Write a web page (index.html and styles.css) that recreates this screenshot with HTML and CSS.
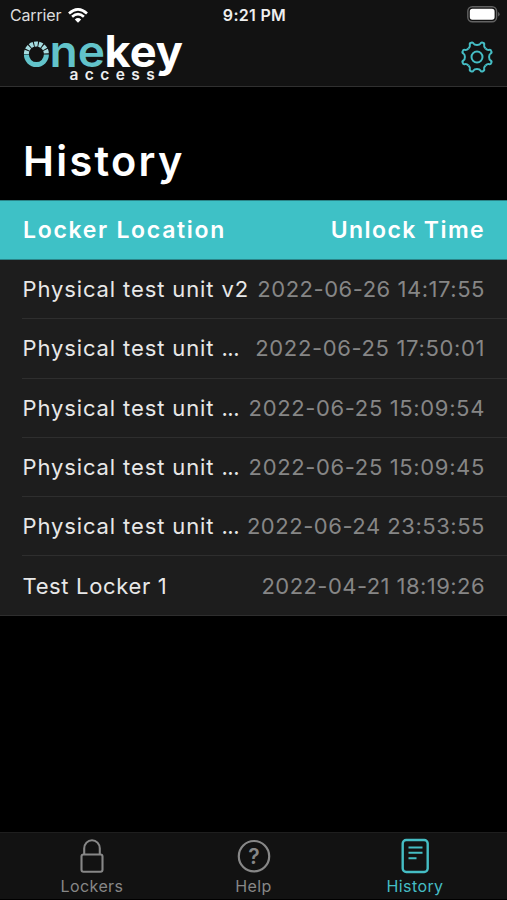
FILE: index.html
```html
<!DOCTYPE html>
<html lang="en">
<head>
<meta charset="utf-8">
<title>History</title>
<link rel="stylesheet" href="styles.css">
</head>
<body>
<div class="app">
  <header class="top">
    <div class="status">
      <div class="carrier"><span>Carrier</span>
        <svg width="20" height="15" viewBox="0 0 20 15" fill="none" stroke="#fff" stroke-width="2.7"><path d="M1 5.4Q10-2.6 19 5.4M4.1 8.7Q10 3.5 15.9 8.7"/><path d="M6.8 11.4Q10 8.8 13.2 11.4L10 14.7Z" fill="#fff" stroke="none"/></svg>
      </div>
      <div class="clock">9:21 PM</div>
      <svg class="battery" width="34" height="17" viewBox="0 0 34 17"><rect x=".8" y=".8" width="28.8" height="14.9" rx="4.5" fill="none" stroke="#626262" stroke-width="1.4"/><rect x="2.8" y="2.8" width="24.8" height="10.9" rx="2.6" fill="#fff"/><path d="M31.1 5.8q3 2.4 0 4.8z" fill="#626262"/></svg>
    </div>
    <div class="brand">
      <svg class="logo" width="170" height="56" viewBox="20 30 170 56">
        <path d="M26.4 54.6A10 10 0 0 0 46.4 54.6" fill="none" stroke="#62c3ca" stroke-width="5"/>
        <path d="M26.4 54A10 10 0 0 1 46.4 54" fill="none" stroke="#a5dce0" stroke-width="5" stroke-dasharray="3.5 1"/>
        <text class="one" x="49.5" y="67" textLength="55.5" lengthAdjust="spacingAndGlyphs">ne</text>
        <text class="key" x="104.5" y="67" textLength="78.5" lengthAdjust="spacingAndGlyphs">key</text>
        <text class="access" x="69.5" y="79.8">access</text>
      </svg>
      <svg class="gear" width="34" height="34" viewBox="-17 -17 34 34" fill="none" stroke="#45bdc4" stroke-width="2">
        <defs><path id="t" d="M0-12.1C1.8-12.1 2.9-12.6 3.5-13.6C4-14.6 4.8-14.8 5.9-14.3C7.07-13.86 7.5-13.15 7.14-12.09C6.86-10.96 7.28-9.83 8.56-8.56"/></defs>
        <use href="#t"/><use href="#t" transform="rotate(45)"/><use href="#t" transform="rotate(90)"/><use href="#t" transform="rotate(135)"/><use href="#t" transform="rotate(180)"/><use href="#t" transform="rotate(225)"/><use href="#t" transform="rotate(270)"/><use href="#t" transform="rotate(315)"/>
        <circle r="5.5"/>
      </svg>
    </div>
  </header>
  <main>
    <h1>History</h1>
    <div class="head"><span class="h-loc">Locker Location</span><span class="h-time">Unlock Time</span></div>
    <div class="list">
      <div class="row"><span class="name">Physical test unit v2</span><span class="time a">2022-06-26 14:17:55</span></div>
      <div class="row"><span class="name">Physical test unit <span class="dots">...</span></span><span class="time b">2022-06-25 17:50:01</span></div>
      <div class="row"><span class="name">Physical test unit <span class="dots">...</span></span><span class="time b">2022-06-25 15:09:54</span></div>
      <div class="row"><span class="name">Physical test unit <span class="dots">...</span></span><span class="time b">2022-06-25 15:09:45</span></div>
      <div class="row"><span class="name">Physical test unit <span class="dots">...</span></span><span class="time a">2022-06-24 23:53:55</span></div>
      <div class="row"><span class="name short">Test Locker 1</span><span class="time c">2022-04-21 18:19:26</span></div>
    </div>
  </main>
  <nav>
    <div class="tab"><svg width="36" height="36" viewBox="0 0 36 36" fill="none" stroke="currentColor" stroke-width="2.1"><path d="M10.2 16.5V10.5a7.8 8.3 0 0 1 15.6 0v6"/><rect x="7.5" y="16.5" width="21" height="17.2" rx="2"/></svg><span>Lockers</span></div>
    <div class="tab"><svg width="36" height="36" viewBox="0 0 36 36" fill="none" stroke="currentColor" stroke-width="2.2"><circle cx="18" cy="18.2" r="15.2"/><text x="18" y="25.8">?</text></svg><span>Help</span></div>
    <div class="tab active"><svg width="36" height="36" viewBox="0 0 36 36" fill="none" stroke="currentColor" stroke-width="2.4"><rect x="5.7" y="2" width="25" height="32" rx="3.5"/><path d="M11.5 9.5h14M11.5 14.8h14M11.5 20.2h8" stroke-width="2"/></svg><span>History</span></div>
  </nav>
</div>
</body>
</html>
```
FILE: styles.css
```css
* { box-sizing: border-box; }
body { margin: 0; background: #000; color: #fff; font-family: Inter, "Liberation Sans", sans-serif; }
.app { width: 507px; height: 900px; display: flex; flex-direction: column; overflow: hidden; }
.top { height: 87px; background: #121212; border-bottom: 1px solid #303030; }
.status { height: 30px; display: grid; grid-template-columns: 1fr auto 1fr; align-items: center; padding: 0 8px 0 10px; }
.carrier { display: flex; align-items: center; gap: 7px; font-size: 16px; letter-spacing: -.15px; color: #ddd; }
.clock { font-size: 16px; font-weight: 600; letter-spacing: .3px; color: #eee; }
.battery { justify-self: end; margin: -2px -2px 0 0; }
.brand { display: flex; justify-content: space-between; padding: 0 13px 0 20px; }
.logo { overflow: visible; }
.gear { margin-top: 10px; }
.one { font-size: 43.5px; font-weight: 600; fill: #62c3ca; }
.key { font-size: 43.5px; font-weight: 700; fill: #fff; }
.access { font-size: 15.5px; font-weight: 600; letter-spacing: 6.4px; fill: #eee; }
main { flex: 1; }
h1 { margin: 0; height: 113px; padding: 49px 0 0 23px; font-size: 41.5px; line-height: 50px; font-weight: 600; letter-spacing: 2.3px; }
.head { height: 60px; display: flex; justify-content: space-between; align-items: center; padding: 0 22px 0 23px; background: #3ec1c6; border-top: 1px solid #2a8488; border-bottom: 1px solid #2a8488; font-size: 23px; line-height: 28px; font-weight: 600; }
.h-loc { letter-spacing: 1.7px; }
.h-time { letter-spacing: 1.4px; }
.list { background: #1d1d1d; padding-left: 22px; border-bottom: 1px solid #2e2e2e; }
.row { height: 59.25px; display: flex; justify-content: space-between; align-items: center; padding-right: 22px; border-bottom: 1px solid #2e2e2e; white-space: nowrap; font-size: 22px; }
.row:last-child { height: 58.75px; border: 0; }
.name { color: #e8e8e8; letter-spacing: .88px; margin-left: .5px; }
.short { letter-spacing: .65px; }
.dots { letter-spacing: -.5px; }
.time { color: #868686; }
.a { letter-spacing: .53px; }
.b { letter-spacing: .64px; }
.c { letter-spacing: .44px; }
nav { height: 68px; background: #121212; border-top: 1px solid #1e1e1e; display: flex; justify-content: center; border-bottom: 1px solid #000; }
.tab { width: 161.5px; display: flex; flex-direction: column; align-items: center; padding-top: 5px; color: #878787; font-size: 16px; }
.tab span { line-height: 20px; margin-top: 2px; letter-spacing: .4px; }
.tab text { font-size: 21px; font-weight: 600; fill: currentColor; stroke: none; text-anchor: middle; }
.tab.active { color: #45bdc4; }
```
